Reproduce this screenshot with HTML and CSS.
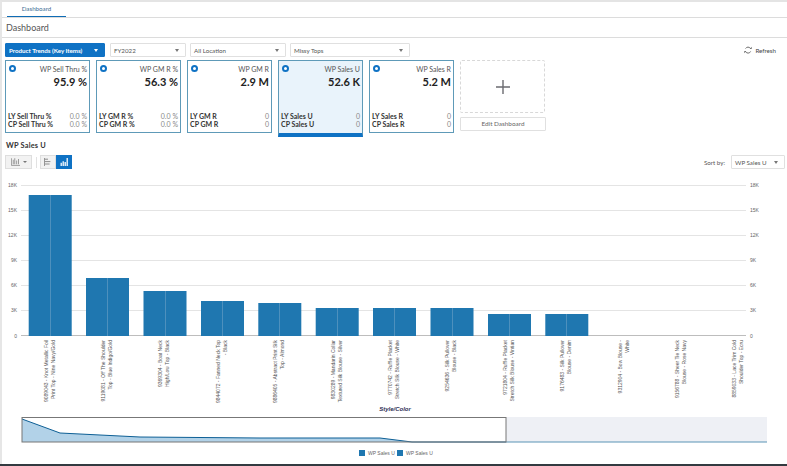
FILE: index.html
```html
<!DOCTYPE html>
<html lang="en">
<head>
<meta charset="utf-8">
<title>Dashboard</title>
<link rel="stylesheet" href="styles.css">
</head>
<body>
<div class="page">
  <nav class="tabs"><a class="tab">Dashboard</a></nav>
  <header class="title">Dashboard</header>
  <section class="filters">
    <div class="select primary"><span>Product Trends (Key Items)</span><i class="caret"></i></div>
    <div class="select w76"><span>FY2022</span><i class="caret"></i></div>
    <div class="select w96"><span>All Location</span><i class="caret"></i></div>
    <div class="select w120"><span>Missy Tops</span><i class="caret"></i></div>
    <div class="refresh">
      <svg width="8" height="8" viewBox="0 0 10 10"><path d="M2 3.2A3.5 3.5 0 0 1 8 3M8.3 6.8A3.5 3.5 0 0 1 2 7" fill="none" stroke="#666" stroke-width="1.2"/><path d="M7 3.6h2.6V1zM3 6.4H.4V9z" fill="#666"/></svg>
      <span>Refresh</span>
    </div>
  </section>
  <section class="cards">
    <article class="card">
      <div class="head"><i class="dot"></i><span>WP Sell Thru %</span></div>
      <div class="value">95.9 %</div>
      <div class="rows">
        <div class="row"><b>LY Sell Thru %</b><span>0.0 %</span></div>
        <div class="row"><b>CP Sell Thru %</b><span>0.0 %</span></div>
      </div>
    </article>
    <article class="card">
      <div class="head"><i class="dot"></i><span>WP GM R %</span></div>
      <div class="value">56.3 %</div>
      <div class="rows">
        <div class="row"><b>LY GM R %</b><span>0.0 %</span></div>
        <div class="row"><b>CP GM R %</b><span>0.0 %</span></div>
      </div>
    </article>
    <article class="card">
      <div class="head"><i class="dot"></i><span>WP GM R</span></div>
      <div class="value">2.9 M</div>
      <div class="rows">
        <div class="row"><b>LY GM R</b><span>0</span></div>
        <div class="row"><b>CP GM R</b><span>0</span></div>
      </div>
    </article>
    <article class="card active">
      <div class="head"><i class="dot"></i><span>WP Sales U</span></div>
      <div class="value">52.6 K</div>
      <div class="rows">
        <div class="row"><b>LY Sales U</b><span>0</span></div>
        <div class="row"><b>CP Sales U</b><span>0</span></div>
      </div>
    </article>
    <article class="card">
      <div class="head"><i class="dot"></i><span>WP Sales R</span></div>
      <div class="value">5.2 M</div>
      <div class="rows">
        <div class="row"><b>LY Sales R</b><span>0</span></div>
        <div class="row"><b>CP Sales R</b><span>0</span></div>
      </div>
    </article>
    <div class="add-col">
      <div class="add"><svg width="16" height="16" viewBox="0 0 16 16"><path d="M8 1v14M1 8h14" stroke="#6b6b70" stroke-width="1.4"/></svg></div>
      <div class="edit">Edit Dashboard</div>
    </div>
  </section>
  <h2 class="chart-title">WP Sales U</h2>
  <section class="chart-tools">
    <div class="tool type">
      <svg width="9" height="8" viewBox="0 0 12 10"><path d="M.5 0v9.500h11.500M3 2v6M5 0v8M7.500 3v5M10 1v7" fill="none" stroke="#888" stroke-width="1.100"/></svg>
      <i class="caret small"></i>
    </div>
    <div class="sep"></div>
    <div class="orient">
      <div class="tool">
        <svg width="8" height="8" viewBox="0 0 10 10"><path d="M.5 0v10M1 1.500h4M1 4.500h7M1 7.500h6" fill="none" stroke="#888" stroke-width="1.200"/></svg>
      </div>
      <div class="tool on">
        <svg width="8" height="8" viewBox="0 0 10 10"><path d="M1.500 10V6M4 10V4M6.500 10V5M9 10V0" fill="none" stroke="#fff" stroke-width="1.600"/></svg>
      </div>
    </div>
    <div class="sort">
      <label>Sort by:</label>
      <div class="select w54"><span>WP Sales U</span><i class="caret"></i></div>
    </div>
  </section>
  <svg class="chart" width="787" height="289" viewBox="0 175 787 289">
    <g class="grid">
      <path d="M21 185.500H746M21 210.500H746M21 235.500H746M21 260.500H746M21 285.500H746M21 310.500H746"/>
      <path class="base" d="M21 335.500H746"/>
    </g>
    <g class="axis">
      <text x="17" y="187" text-anchor="end">18K</text><text x="17" y="212" text-anchor="end">15K</text>
      <text x="17" y="237" text-anchor="end">12K</text><text x="17" y="262" text-anchor="end">9K</text>
      <text x="17" y="287" text-anchor="end">6K</text><text x="17" y="312" text-anchor="end">3K</text>
      <text x="17" y="338" text-anchor="end">0</text>
      <text x="750" y="187">18K</text><text x="750" y="212">15K</text>
      <text x="750" y="237">12K</text><text x="750" y="262">9K</text>
      <text x="750" y="287">6K</text><text x="750" y="312">3K</text>
      <text x="750" y="338">0</text>
    </g>
    <g class="bars">
      <rect x="28.700" y="195" width="43" height="141"/>
      <rect x="86" y="278" width="43" height="58"/>
      <rect x="143.500" y="291" width="43" height="45"/>
      <rect x="201" y="301" width="43" height="35"/>
      <rect x="258.300" y="303" width="43" height="33"/>
      <rect x="315.700" y="308" width="43" height="28"/>
      <rect x="373" y="308" width="43" height="28"/>
      <rect x="430.500" y="308" width="43" height="28"/>
      <rect x="488" y="314" width="43" height="22"/>
      <rect x="545.300" y="314" width="43" height="22"/>
    </g>
    <path class="ticks" d="M50.500 195V336M107.500 278V336M165.500 291V336M222.500 301V336M279.500 303V336M337.500 308V336M394.500 308V336M452.500 308V336M509.500 314V336M566.500 314V336"/>
    <g class="labels" text-anchor="end">
      <text transform="translate(48 340) rotate(-90)">9089043 - Knot Metallic Foil</text>
      <text transform="translate(55 340) rotate(-90)">Print Top - Nine Navy/Gold</text>
      <text transform="translate(105 340) rotate(-90)">9119081 - Off The Shoulder</text>
      <text transform="translate(112 340) rotate(-90)">Top - Blue Indigo/Gold</text>
      <text transform="translate(162 340) rotate(-90)">9369304 - Boat Neck</text>
      <text transform="translate(169 340) rotate(-90)">High/Low Top - Black</text>
      <text transform="translate(220 340) rotate(-90)">9844072 - Fanned Neck Top</text>
      <text transform="translate(227 340) rotate(-90)">- Black</text>
      <text transform="translate(277 340) rotate(-90)">9886405 - Abstract Print Silk</text>
      <text transform="translate(284 340) rotate(-90)">Top - Almond</text>
      <text transform="translate(335 340) rotate(-90)">9830289 - Mandarin Collar</text>
      <text transform="translate(342 340) rotate(-90)">Textured Silk Blouse - Silver</text>
      <text transform="translate(392 340) rotate(-90)">9770742 - Ruffle Placket</text>
      <text transform="translate(399 340) rotate(-90)">Stretch Silk Blouse - White</text>
      <text transform="translate(449 340) rotate(-90)">9254636 - Silk Pullover</text>
      <text transform="translate(456 340) rotate(-90)">Blouse - Black</text>
      <text transform="translate(507 340) rotate(-90)">9721804 - Ruffle Placket</text>
      <text transform="translate(514 340) rotate(-90)">Stretch Silk Blouse - Vintian</text>
      <text transform="translate(564 340) rotate(-90)">9176483 - Silk Pullover</text>
      <text transform="translate(571 340) rotate(-90)">Blouse - Denim</text>
      <text transform="translate(622 340) rotate(-90)">9312904 - Bow Blouse -</text>
      <text transform="translate(629 340) rotate(-90)">White</text>
      <text transform="translate(679 340) rotate(-90)">9156788 - Sheer Tie Neck</text>
      <text transform="translate(686 340) rotate(-90)">Blouse - Rose Navy</text>
      <text transform="translate(736 340) rotate(-90)">8859033 - Lace Trim Cold</text>
      <text transform="translate(743 340) rotate(-90)">Shoulder Top - Ecru</text>
    </g>
    <text class="axis-title" x="395" y="410.500" text-anchor="middle">Style/Color</text>
    <rect class="ov-rest" x="506" y="417" width="261" height="25"/>
    <path class="ov-line" d="M506 442H767"/>
    <path class="ov-area" d="M22 419L60 433L140 437L260 438L380 438L412 442H22Z"/>
    <path class="ov-edge" d="M22 419L60 433L140 437L260 438L380 438L412 442H506"/>
    <rect class="ov-win" x="22" y="417.500" width="484" height="24.500"/>
    <rect class="sw" x="359" y="450" width="6" height="6"/>
    <text class="legend" x="368" y="455">WP Sales U</text>
    <rect class="sw" x="397" y="450" width="6" height="6"/>
    <text class="legend" x="406" y="455">WP Sales U</text>
  </svg>
  <footer class="strip"></footer>
</div>
</body>
</html>
```
FILE: styles.css
```css
* { box-sizing: border-box; }
html, body { margin: 0; background: #fff; }
body { width: 787px; height: 466px; overflow: hidden; font-family: Lato, "Open Sans", "Liberation Sans", sans-serif; color: #333; }
.page { width: 787px; height: 466px; display: flex; flex-direction: column; border-top: 2px solid #e4e4e4; border-left: 2px solid #e6e6e6; }
.page > * { margin-left: -2px; flex: none; }

.tabs { height: 16px; padding-left: 5px; border-bottom: 1px solid #dcdcdc; margin-left: 0; }
.tab { display: block; width: 59px; height: 15px; line-height: 13px; font-size: 6.200px; text-align: center; color: #3a6c94; border-bottom: 1.500px solid #0f6cb5; }
.title { height: 20px; margin-left: 0; padding-left: 4px; line-height: 19px; font-size: 9px; color: #555; border-bottom: 1px solid #dcdcdc; }

.filters { display: flex; align-items: center; gap: 4px; height: 14px; margin-top: 5px; padding-left: 5px; }
.select { position: relative; display: flex; align-items: center; justify-content: space-between; height: 14px; padding: 0 6px 0 3px; font-size: 6.200px; color: #555; background: #fff; border: 1px solid #e0e0e0; border-radius: 1px; }
.primary { width: 100px; margin-right: 1px; color: #fff; font-weight: 700; background: #0f72c4; border-color: #0f72c4; white-space: nowrap; font-size: 6.200px; }
.primary .caret { border-top-color: #fff; }
.w76 { width: 76px; }
.w96 { width: 96px; }
.w120 { width: 120px; }
.w54 { width: 54px; }
.caret { display: block; width: 0; height: 0; border-left: 2.500px solid transparent; border-right: 2.500px solid transparent; border-top: 3px solid #777; flex: none; }
.refresh { display: flex; align-items: center; gap: 3px; margin-left: auto; margin-right: 11px; font-size: 6.200px; color: #444; }

.cards { display: flex; gap: 6px; margin-top: 3px; padding-left: 5px; height: 77px; align-items: flex-start; }
.card { width: 85px; height: 73px; padding: 3px 2px 4px 2px; display: flex; flex-direction: column; border: 1px solid #5e9ab8; background: #fff; }
.card.active { height: 77px; padding-bottom: 5px; background: #e9f3fb; border-bottom: 4px solid #0f72c4; }
.head { display: flex; justify-content: space-between; align-items: center; font-size: 7px; color: #555; height: 9px; }
.dot { display: block; width: 7px; height: 7px; margin-left: 1px; border-radius: 50%; border: 2px solid #0f72c4; background: #fff; }
.value { margin-top: 1.500px; text-align: right; font-size: 11px; font-weight: 700; color: #222; line-height: 13px; }
.rows { margin-top: auto; }
.row { display: flex; justify-content: space-between; font-size: 7px; line-height: 8px; }
.row b { color: #333; font-weight: 700; }
.row span { color: #888; }
.add-col { width: 86px; }
.add { width: 85px; height: 53px; display: flex; align-items: center; justify-content: center; border: 1px dashed #d8d8d8; border-radius: 2px; }
.edit { height: 14px; margin-top: 4px; line-height: 12px; text-align: center; font-size: 6.400px; color: #666; border: 1px solid #e0e0e0; border-radius: 1px; }

.chart-title { margin: 4px 0 0 -2px; padding-left: 6px; height: 10px; line-height: 10px; font-size: 7.400px; font-weight: 700; letter-spacing: .2px; color: #333; }
.chart-tools { display: flex; align-items: center; height: 14px; margin-top: 4px; padding-left: 5px; }
.tool { display: flex; align-items: center; justify-content: center; gap: 3px; height: 14px; width: 16px; background: #f2f2f2; border: 1px solid #dedede; }
.tool.type { width: 27px; }
.caret.small { border-left-width: 2px; border-right-width: 2px; border-top-width: 2.500px; }
.sep { width: 1px; height: 11px; margin: 0 3px 0 4px; background: #e2e2e2; }
.orient { display: flex; }
.tool.on { background: #0f72c4; border-color: #0f72c4; }
.sort { display: flex; align-items: center; gap: 6px; margin-left: auto; margin-right: 2px; font-size: 6.200px; color: #555; }

.chart { display: block; margin-top: 6px; font-family: "Liberation Sans", sans-serif; }
.grid path { stroke: #e4e4e4; stroke-width: 1; fill: none; }
.grid path.base { stroke: #bdbdbd; }
.axis text { font-size: 5px; fill: #666; }
.bars rect { fill: #1f77b0; }
.ticks { stroke: #4d90bd; stroke-width: 1; fill: none; }
.labels text { font-size: 5px; fill: #555; }
.axis-title { font-size: 6px; font-weight: 700; font-style: italic; fill: #2f2f55; }
.ov-rest { fill: #eef0f5; }
.ov-line { stroke: #5a94b5; stroke-width: 1; fill: none; }
.ov-area { fill: #b2d2e8; }
.ov-edge { stroke: #0d5f95; stroke-width: 1; fill: none; }
.ov-win { fill: none; stroke: #777; stroke-width: 1; }
.sw { fill: #1f77b0; }
.legend { font-size: 5px; fill: #666; }

.strip { height: 2px; background: #333a40; }
```
